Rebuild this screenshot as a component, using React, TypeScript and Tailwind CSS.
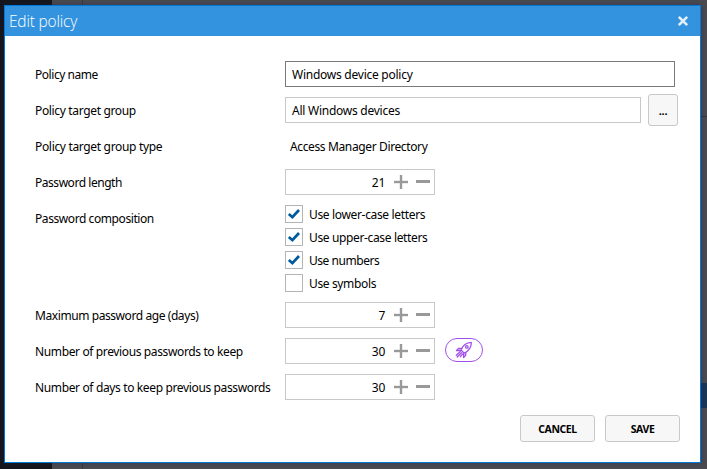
import type { ReactNode } from "react";

const text = "whitespace-nowrap text-[12px] leading-[16px] text-black";

const button =
  "h-[27px] w-[75px] rounded-[3px] border border-[#c8c8c8] bg-[#f7f7f7] pt-px text-[10.5px] font-bold leading-[16px] text-black";

function Row({ label, track, top = "mt-[10px]", children }: { label: string; track: string; top?: string; children: ReactNode }) {
  return (
    <div className={`flex items-start ${top}`}>
      <div className={`w-[250px] shrink-0 pt-[6px] ${text} ${track}`}>{label}</div>
      {children}
    </div>
  );
}

function Spinner({ value }: { value: string }) {
  return (
    <div className="flex h-[26px] w-[150px] items-center justify-end border border-[#c8c8c8] pr-[4px]">
      <span className={`mr-[9px] pt-[2px] ${text} tracking-[-0.3px]`}>{value}</span>
      <svg width="36" height="14" viewBox="0 0 36 14" fill="#999">
        <rect x="0" y="5.8" width="14" height="2.4" />
        <rect x="5.8" y="0" width="2.4" height="14" />
        <rect x="22" y="5" width="14" height="3" />
      </svg>
    </div>
  );
}

function Check({ label, track, checked = false }: { label: string; track: string; checked?: boolean }) {
  return (
    <div className="flex h-[18px] items-center gap-[6px]">
      <span className="flex h-[18px] w-[18px] items-center justify-center border border-[#b4b4b4]">
        {checked && (
          <svg width="16" height="16" viewBox="0 0 16 16" fill="none" stroke="#005a9e" strokeWidth="2.7">
            <path d="M2.8 7.9 6.4 11.2 13 4" />
          </svg>
        )}
      </span>
      <span className={`pt-[2px] ${text} ${track}`}>{label}</span>
    </div>
  );
}

export default function App() {
  return (
    <div className="relative h-[469px] w-[707px] overflow-hidden bg-[#4b4b50] font-['Noto_Sans','Open_Sans',sans-serif]">
      <div className="absolute inset-y-0 left-0 w-[52px] bg-[#15161b]" />
      <div className="absolute inset-y-0 left-[82px] w-px bg-[#3a3a40]" />
      <div className="absolute right-0 top-[116px] h-px w-[10px] bg-[#38383c]" />
      <div className="absolute right-0 top-[383px] h-[25px] w-[10px] bg-[#1c3655]" />
      <div className="absolute left-[4px] top-[5px] flex h-[458px] w-[697px] flex-col border border-[#0078d7] bg-white shadow-[0_0_6px_rgba(20,30,90,0.4)]">
        <header className="flex h-[30px] shrink-0 items-center justify-between bg-[#3393df] pl-[4px] pr-[11px]">
          <h1 className="whitespace-nowrap font-['Open_Sans','Noto_Sans',sans-serif] text-[15.5px] font-light leading-[20px] tracking-[-0.2px] text-white">
            Edit policy
          </h1>
          <svg width="12" height="12" viewBox="0 0 12 12" stroke="#e3f0fb" strokeWidth="2.6">
            <path d="M1.8 1.8 10.2 10.2M10.2 1.8 1.8 10.2" />
          </svg>
        </header>
        <main className="flex flex-col pl-[30px] pt-[25px]">
          <Row label="Policy name" track="tracking-[-0.45px]" top="mt-0">
            <div className={`h-[26px] w-[390px] border border-[#7a7a7a] pl-[6px] pt-[5px] ${text} tracking-[-0.25px]`}>
              Windows device policy
            </div>
          </Row>
          <Row label="Policy target group" track="tracking-[-0.34px]">
            <div className={`h-[26px] w-[356px] border border-[#c8c8c8] pl-[6px] pt-[5px] ${text} tracking-[-0.25px]`}>
              All Windows devices
            </div>
            <button className="-my-[3px] ml-[7px] h-[32px] w-[30px] rounded-[3px] border border-[#c8c8c8] bg-[#f7f7f7] pt-px text-[11px] font-bold leading-[14px] tracking-[-0.3px] text-black">
              ...
            </button>
          </Row>
          <Row label="Policy target group type" track="tracking-[-0.33px]">
            <div className={`h-[26px] pl-[5px] pt-[6px] ${text} tracking-[-0.37px]`}>Access Manager Directory</div>
          </Row>
          <Row label="Password length" track="tracking-[-0.46px]">
            <Spinner value="21" />
          </Row>
          <Row label="Password composition" track="tracking-[-0.42px]">
            <div className="flex flex-col gap-[5px]">
              <Check label="Use lower-case letters" track="tracking-[-0.34px]" checked />
              <Check label="Use upper-case letters" track="tracking-[-0.36px]" checked />
              <Check label="Use numbers" track="tracking-[-0.46px]" checked />
              <Check label="Use symbols" track="tracking-[-0.36px]" />
            </div>
          </Row>
          <Row label="Maximum password age (days)" track="tracking-[-0.42px]">
            <Spinner value="7" />
          </Row>
          <Row label="Number of previous passwords to keep" track="tracking-[-0.37px]">
            <Spinner value="30" />
            <div className="ml-[10px] flex h-[24px] w-[38px] items-center justify-center rounded-full border border-[#a04fe8]">
              <svg
                width="18"
                height="18"
                viewBox="0 0 18 18"
                fill="none"
                stroke="#a04fe8"
                strokeWidth="1.3"
                strokeLinecap="round"
                strokeLinejoin="round"
              >
                <path d="M6 9C7.6 4.6 10.5 1.6 16.3 1.3 16.3 6.6 13.6 10.2 9.2 12.2Z" />
                <circle cx="11.8" cy="5.9" r="1.3" />
                <path d="M6.5 7.3 3.5 7.5 1.4 9.7 5.8 9.5M10.8 11.8 10.6 14.4 8.6 16.5 8.7 12.6M5.2 10.6 1.3 14.3M6.4 11.7 2.2 16M7.6 13 5.4 15.7" />
              </svg>
            </div>
          </Row>
          <Row label="Number of days to keep previous passwords" track="tracking-[-0.36px]">
            <Spinner value="30" />
          </Row>
        </main>
        <footer className="mt-[15px] flex justify-end gap-[10px] pr-[20px]">
          <button className={`${button} tracking-[-0.4px]`}>CANCEL</button>
          <button className={`${button} tracking-[-0.4px]`}>SAVE</button>
        </footer>
      </div>
    </div>
  );
}
